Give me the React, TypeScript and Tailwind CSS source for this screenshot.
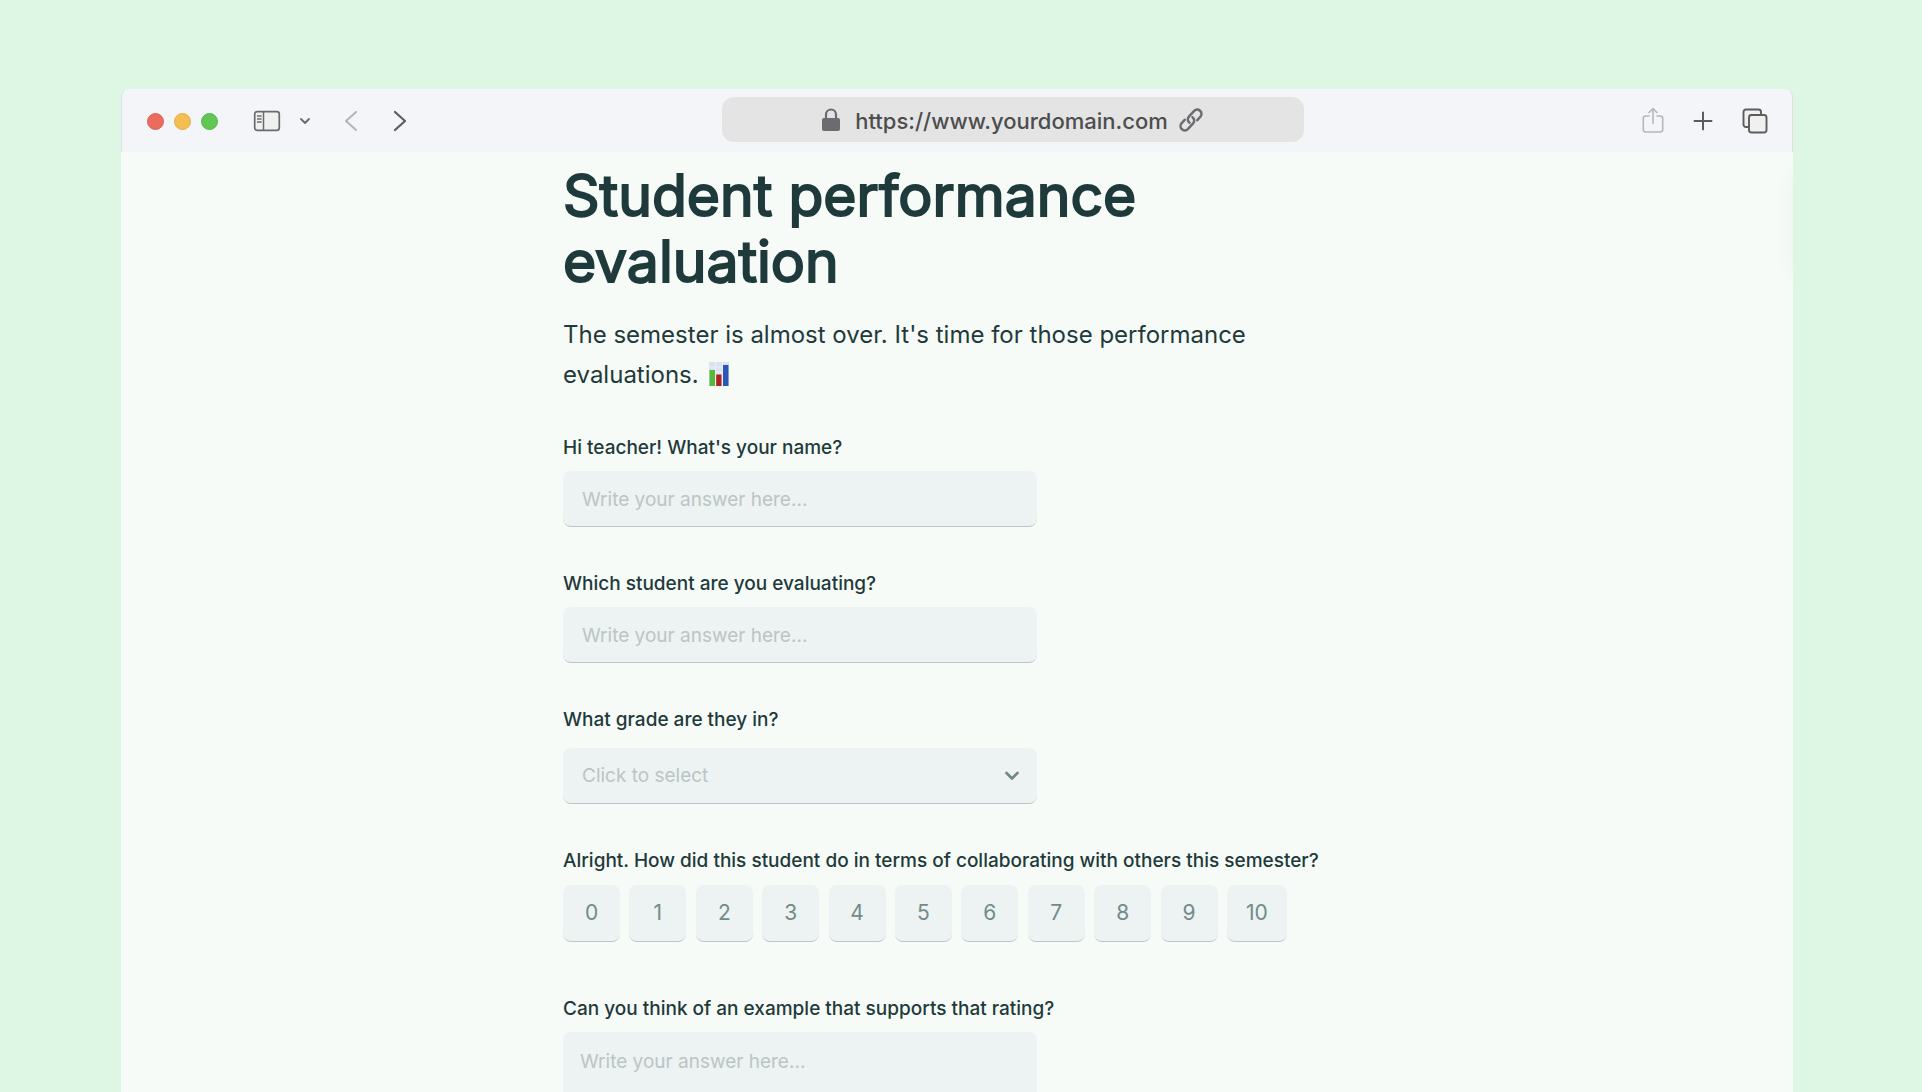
import type { ReactNode } from 'react'

const ratings = [0, 1, 2, 3, 4, 5, 6, 7, 8, 9, 10]

const fieldStyle =
  'block w-[474px] rounded-lg border-b border-[#bcc8c8] bg-[#edf2f3] text-[19px] text-[#1f3a3a] placeholder:text-[#bbc5c4] outline-none'

const Toolbar = () => {
  return (
    <header className="flex h-[63px] items-center rounded-t-lg border-x border-[#e0dfe2] bg-[#f4f5f8]">
      <div className="flex flex-1 items-center pt-px pl-[25px]">
        <div className="flex gap-[10px]">
          <span className="h-[17px] w-[17px] rounded-full border border-[#dc6458] bg-[#ec6b5f]" />
          <span className="h-[17px] w-[17px] rounded-full border border-[#e1ae49] bg-[#f4bf50]" />
          <span className="h-[17px] w-[17px] rounded-full border border-[#57b94b] bg-[#62c655]" />
        </div>
        <button aria-label="Sidebar" className="ml-[35px]">
          <svg width="28" height="22" viewBox="0 0 28 22" fill="none" stroke="#6a6a6b">
            <rect x="1.7" y="1.7" width="24.6" height="18.6" rx="2.5" strokeWidth="1.7" fill="#f0f0f1" />
            <path d="M10.5 1.7v18.6" strokeWidth="1.5" />
            <path d="M4.5 6h3.6M4.5 9h3.6M4.5 12h3.6" strokeWidth="1.3" strokeLinecap="round" />
          </svg>
        </button>
        <button aria-label="Tab groups" className="ml-[18px]">
          <svg width="12" height="8" viewBox="0 0 12 8" fill="none" stroke="#6a6a6b" strokeWidth="1.8" strokeLinecap="round" strokeLinejoin="round">
            <path d="M2 2l4 4 4-4" />
          </svg>
        </button>
        <button aria-label="Back" className="ml-[33px]">
          <svg width="14" height="22" viewBox="0 0 14 22" fill="none" stroke="#b4b4b6" strokeWidth="2" strokeLinecap="round" strokeLinejoin="round">
            <path d="M12 2L2 11l10 9" />
          </svg>
        </button>
        <button aria-label="Forward" className="ml-[35px]">
          <svg width="14" height="22" viewBox="0 0 14 22" fill="none" stroke="#5c5c5d" strokeWidth="2.2" strokeLinecap="round" strokeLinejoin="round">
            <path d="M2 2l10 9-10 9" />
          </svg>
        </button>
      </div>

      <div className="mb-[2px] ml-[110px] flex h-[45px] w-[582px] items-center justify-center rounded-xl bg-[#e4e4e4] text-[#4d4d4e]">
        <svg width="20" height="24" viewBox="0 0 20 24" className="mr-[14px]">
          <path d="M5 11V6.5a5 5 0 0 1 10 0V11" fill="none" stroke="#6b6c70" strokeWidth="2.2" />
          <rect x="1" y="10" width="18" height="13" rx="2" fill="#6b6c70" />
        </svg>
        <span className="pt-1 text-[22px] font-medium">https://www.yourdomain.com</span>
        <svg width="26" height="26" viewBox="0 0 26 26" fill="none" stroke="#6b6c70" strokeWidth="2.5" strokeLinecap="round" strokeLinejoin="round" className="ml-[10px]">
          <path d="M11.5 15.8c-2-1.500-2.300-4.200-.6-6.100l5.300-5.900a4.300 4.300 0 0 1 6.400 5.700l-3.300 3.700" />
          <path d="M14.5 10.2c2 1.500 2.300 4.200.6 6.100l-5.300 5.900a4.300 4.300 0 0 1-6.400-5.700l3.300-3.700" />
        </svg>
      </div>

      <div className="flex flex-1 items-center justify-end pr-6">
        <button aria-label="Share" className="mr-[29px]">
          <svg width="22" height="27" viewBox="0 0 22 27" fill="none" stroke="#b7b7b9" strokeWidth="1.6" strokeLinecap="round" strokeLinejoin="round">
            <path d="M7 9H3.8A2.500 2.500 0 0 0 1.300 11.500v11A2.500 2.500 0 0 0 3.800 25h14.400a2.500 2.500 0 0 0 2.500-2.500v-11A2.500 2.500 0 0 0 18.200 9H15" />
            <path d="M11 16.5V1.800M7 5.500l4-4 4 4" />
          </svg>
        </button>
        <button aria-label="New tab" className="mr-[29px]">
          <svg width="20" height="20" viewBox="0 0 20 20" stroke="#5c5c5d" strokeWidth="2" strokeLinecap="round">
            <path d="M10 1.5v17M1.500 10h17" />
          </svg>
        </button>
        <button aria-label="Show tabs">
          <svg width="26" height="26" viewBox="0 0 26 26" fill="#f0f0f1" stroke="#5c5c5d" strokeWidth="1.9">
            <rect x="1.5" y="1.5" width="17.5" height="17.5" rx="2.5" />
            <rect x="7" y="7" width="17.5" height="17.5" rx="2.5" />
          </svg>
        </button>
      </div>
    </header>
  )
}

const ChartEmoji = () => {
  return (
    <svg role="img" aria-label="bar chart" width="20" height="24" viewBox="0 0 20 24" className="ml-1 inline-block align-[-3px]">
      <rect width="20" height="24" fill="#dbe3ee" />
      <path d="M0 5h20M0 10h20M6.5 0v24M13.5 0v24" stroke="#eef2f8" strokeWidth="0.8" />
      <rect x="0.5" y="8" width="5.5" height="16" fill="#56b93c" />
      <rect x="7.2" y="12.5" width="5.3" height="11.5" fill="#b0231c" />
      <rect x="14" y="3" width="5.5" height="21" fill="#2857b8" />
    </svg>
  )
}

const Label = ({ id, children }: { id: string; children: ReactNode }) => {
  return (
    <label htmlFor={id} className="block text-[19px] leading-6 font-medium">
      {children}
    </label>
  )
}

const App = () => {
  return (
    <div className="h-screen overflow-hidden bg-[#def7e5] pt-[89px] pr-[129px] pl-[121px] font-['Inter',sans-serif] text-[#1f3a3a]">
      <div className="flex h-full flex-col">
        <Toolbar />
        <main className="relative flex-1 overflow-hidden bg-[#f6fbf8]">
          <div className="absolute top-6 -right-12 h-24 w-10 shadow-[0_0_28px_rgba(0,0,0,0.08)]" />
          <form className="mx-auto max-w-[788px] pt-[11px]">
            <h1 className="max-w-[640px] text-[57px] leading-[66px] [-webkit-text-stroke:2px_#1f3a3a]">Student performance evaluation</h1>
            <p className="mt-5 text-[24px] leading-10">
              The semester is almost over. It's time for those performance evaluations. <ChartEmoji />
            </p>

            <div className="mt-[41px] space-y-[45px]">
              <div>
                <Label id="teacher">Hi teacher! What's your name?</Label>
                <input id="teacher" type="text" placeholder="Write your answer here..." className={`${fieldStyle} mt-[11px] h-14 px-[19px] pt-[2px]`} />
              </div>
              <div>
                <Label id="student">Which student are you evaluating?</Label>
                <input id="student" type="text" placeholder="Write your answer here..." className={`${fieldStyle} mt-[11px] h-14 px-[19px] pt-[2px]`} />
              </div>
              <div>
                <Label id="grade">What grade are they in?</Label>
                <div className="relative mt-4 w-[474px]">
                  <select id="grade" defaultValue="" className={`${fieldStyle} h-14 appearance-none px-[19px] pt-[2px] text-[#bbc5c4]`}>
                    <option value="">Click to select</option>
                  </select>
                  <svg width="16" height="12" viewBox="0 0 16 12" fill="none" stroke="#6f8886" strokeWidth="2.6" strokeLinecap="round" strokeLinejoin="round" className="pointer-events-none absolute top-[22px] right-[17px]">
                    <path d="M2.5 3L8 8.500 13.500 3" />
                  </svg>
                </div>
              </div>
              <fieldset>
                <legend className="text-[19px] leading-6 font-medium">
                  Alright. How did this student do in terms of collaborating with others this semester?
                </legend>
                <div className="mt-3 flex max-w-[724px] justify-between">
                  {ratings.map((n) => (
                    <button
                      key={n}
                      type="button"
                      className="h-[57px] w-[57px] rounded-lg border-b border-[#bcc8c8] bg-[#edf2f3] text-[21px] text-[#738b88] last:w-[60px]"
                    >
                      {n}
                    </button>
                  ))}
                </div>
              </fieldset>
              <div className="pt-[10px]">
                <Label id="example">Can you think of an example that supports that rating?</Label>
                <textarea id="example" placeholder="Write your answer here..." className={`${fieldStyle} mt-[11px] h-32 resize-none px-[17px] py-4`} />
              </div>
            </div>
          </form>
        </main>
      </div>
    </div>
  )
}

export default App
